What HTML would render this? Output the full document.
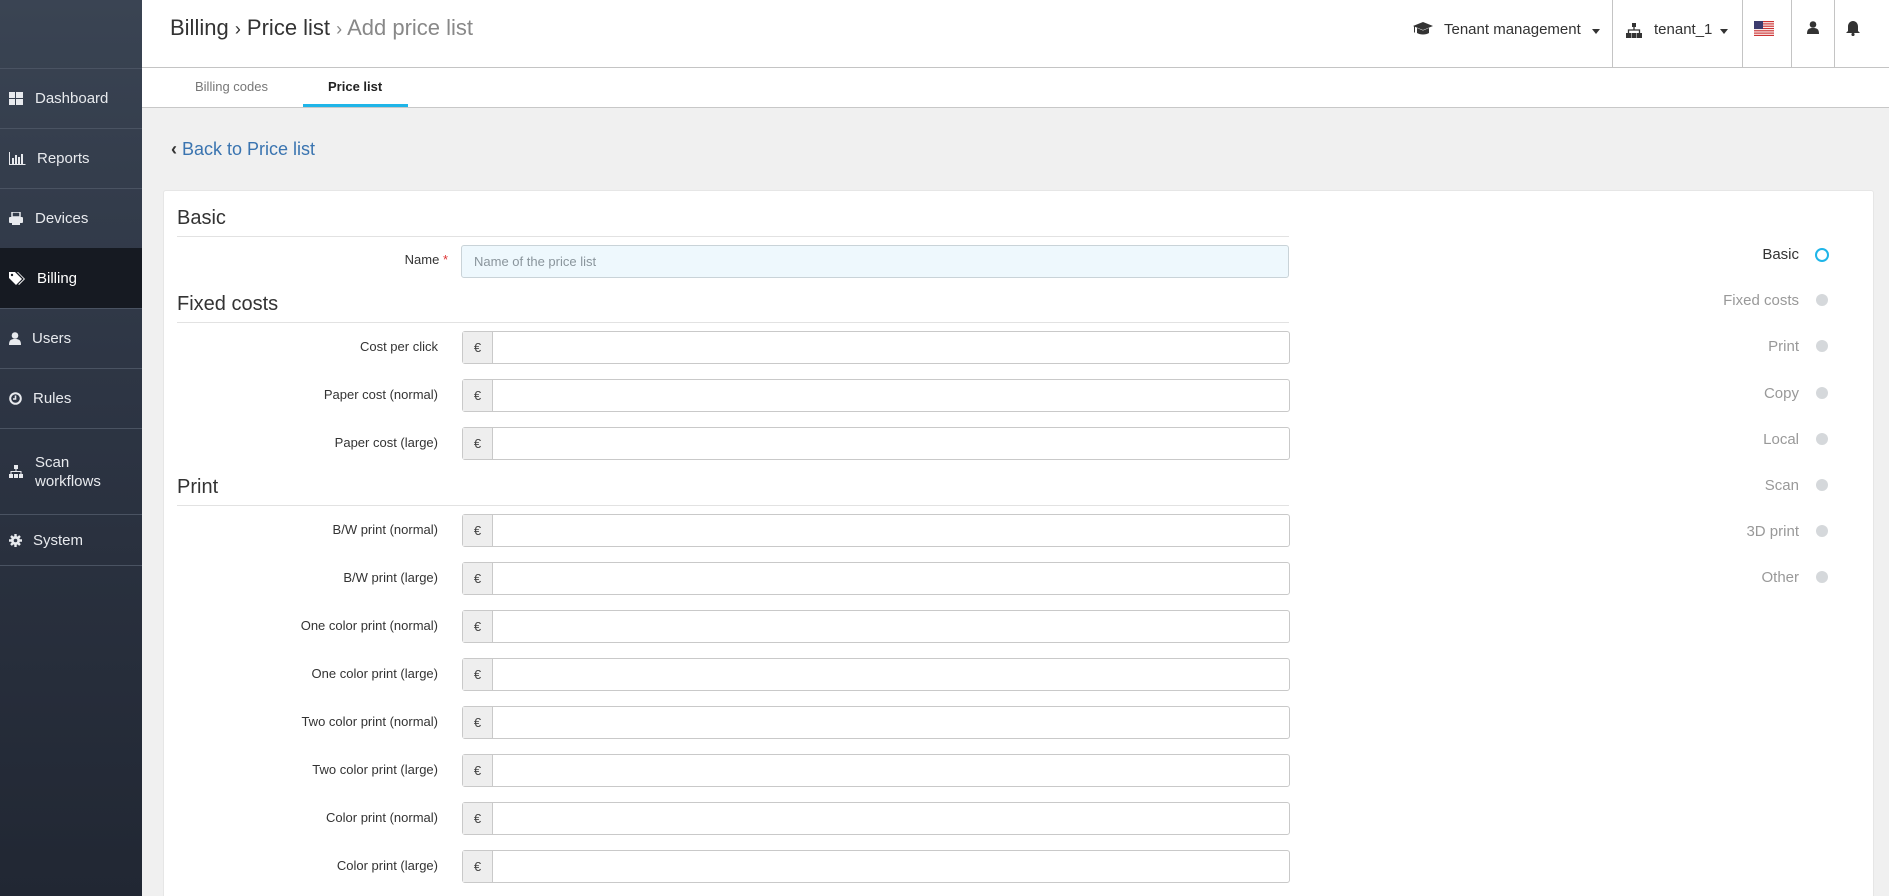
<!DOCTYPE html>
<html style="overflow:hidden"><head><meta charset="utf-8"><style>
*{box-sizing:border-box;margin:0;padding:0}
html,body{width:1889px;height:896px;overflow:hidden}
body{background:#f0f0f0;font-family:"Liberation Sans",sans-serif;position:relative}
.sb{position:absolute;left:0;top:0;width:142px;height:896px;background:linear-gradient(#3a4453,#2e3645 40%,#212733)}
.it{position:absolute;left:0;width:142px;border-top:1px solid #4a5362;color:#e8eaee;font-size:15px;display:flex;align-items:center}
.it svg{position:absolute;left:9px}
.it span{position:absolute;left:35px}
.hd{position:absolute;left:142px;top:0;right:0;height:68px;background:#fff;border-bottom:1px solid #c4c4c4}
.bc{position:absolute;left:170px;top:15px;font-size:22px;color:#333}
.bc .g{color:#888}
.tabs{position:absolute;left:142px;top:68px;right:0;height:40px;background:#fff;border-bottom:1px solid #c8c8c8}
.card{position:absolute;left:163px;top:190px;width:1711px;height:720px;background:#fff;border:1px solid #e6e6e6;border-radius:3px}
.h{position:absolute;left:177px;width:1112px;font-size:20px;color:#333;border-bottom:1px solid #e2e2e2;height:30px}
.lb{position:absolute;width:438px;text-align:right;font-size:13px;color:#333}
.in{position:absolute;left:462px;width:828px;height:33px;border:1px solid #c9c9c9;border-radius:3px;background:#fff}
.ad{position:absolute;left:0;top:0;width:30px;height:31px;background:#eeeeee;border-right:1px solid #c9c9c9;font-size:13px;color:#444;text-align:center;line-height:31px}
.nv{position:absolute;width:1799px;left:0;text-align:right;font-size:15px;color:#999}
.dot{position:absolute;left:1816px;width:12px;height:12px;border-radius:50%;background:#d5d8db}
.sep{position:absolute;top:0;width:1px;height:68px;background:#c4c4c4}
</style></head><body>
<div class="sb">
<div class="it" style="top:68px;height:60px"><svg width="14" height="13" viewBox="0 0 14 13"><rect x="0" y="0" width="6" height="6" fill="#e8eaee"/><rect x="7" y="0" width="7" height="6" fill="#e8eaee"/><rect x="0" y="7" width="6" height="6" fill="#e8eaee"/><rect x="7" y="7" width="7" height="6" fill="#e8eaee"/></svg><span>Dashboard</span></div>
<div class="it" style="top:128px;height:60px"><svg width="17" height="13" viewBox="0 0 17 13"><path d="M0.5 0v12.5h16" stroke="#e8eaee" fill="none"/><rect x="3" y="6" width="2" height="6" fill="#e8eaee"/><rect x="6" y="3" width="2" height="9" fill="#e8eaee"/><rect x="9" y="5" width="2" height="7" fill="#e8eaee"/><rect x="12" y="2" width="2" height="10" fill="#e8eaee"/></svg><span style="left:37px">Reports</span></div>
<div class="it" style="top:188px;height:60px"><svg width="14" height="13" viewBox="0 0 14 13"><rect x="3" y="0" width="8" height="5" fill="none" stroke="#e8eaee" stroke-width="1.5"/><rect x="0" y="5" width="14" height="6" rx="1" fill="#e8eaee"/><rect x="3" y="9" width="8" height="4" fill="#e8eaee"/></svg><span>Devices</span></div>
<div class="it" style="top:248px;height:60px;background:#161a22;color:#fff;border-top-color:#161a22"><svg width="16" height="14" viewBox="0 0 16 14"><path d="M0 0h6l7 7-6 6-7-7z" fill="#fff"/><circle cx="3" cy="3" r="1.2" fill="#161a22"/><path d="M8 0h1l7 7-6 6-.7-.7 5.5-5.3z" fill="#fff"/></svg><span style="left:37px">Billing</span></div>
<div class="it" style="top:308px;height:60px"><svg width="12" height="13" viewBox="0 0 12 13"><circle cx="6" cy="3.5" r="3.3" fill="#e8eaee"/><path d="M0 13c0-5 2-6 6-6s6 1 6 6z" fill="#e8eaee"/></svg><span style="left:32px">Users</span></div>
<div class="it" style="top:368px;height:60px"><svg width="13" height="13" viewBox="0 0 13 13"><circle cx="6.5" cy="6.5" r="5.3" fill="none" stroke="#e8eaee" stroke-width="2"/><path d="M6.5 3.5v3.5h-2.5" stroke="#e8eaee" stroke-width="1.6" fill="none"/></svg><span style="left:33px">Rules</span></div>
<div class="it" style="top:428px;height:86px"><svg width="14" height="13" viewBox="0 0 14 13"><rect x="5" y="0" width="4" height="4" fill="#e8eaee"/><path d="M7 4v3M2 9V6.5h10V9" stroke="#e8eaee" fill="none"/><rect x="0" y="9" width="4" height="4" fill="#e8eaee"/><rect x="5" y="9" width="4" height="4" fill="#e8eaee"/><rect x="10" y="9" width="4" height="4" fill="#e8eaee"/></svg><span style="line-height:19px">Scan<br>workflows</span></div>
<div class="it" style="top:514px;height:52px;border-bottom:1px solid #4a5362"><svg width="13" height="13" viewBox="0 0 13 13"><circle cx="6.5" cy="6.5" r="4.5" fill="#e8eaee"/><path d="M6.5 0v13M0 6.5h13M2 2l9 9M11 2l-9 9" stroke="#e8eaee" stroke-width="2.4"/><circle cx="6.5" cy="6.5" r="1.8" fill="#2e3645"/></svg><span style="left:33px">System</span></div>
</div>
<div class="hd">
<div class="bc" style="left:28px">Billing <span style="font-size:18px">›</span> Price list <span class="g" style="font-size:18px">›</span> <span class="g">Add price list</span></div>
<svg style="position:absolute;left:1271px;top:22px" width="20" height="15" viewBox="0 0 20 15"><path d="M0 4l10-4 10 4-10 4z" fill="#333"/><path d="M4 6v5c3 2 9 2 12 0V6l-6 2.5z" fill="#333"/><path d="M1.5 4.5v6" stroke="#333"/></svg>
<div style="position:absolute;left:1302px;top:21px;font-size:15px;color:#333">Tenant management</div>
<div style="position:absolute;left:1450px;top:29px;border:4px solid transparent;border-top:5px solid #333"></div>
<div class="sep" style="left:1470px"></div>
<svg style="position:absolute;left:1484px;top:23px" width="16" height="15" viewBox="0 0 16 15"><rect x="6" y="0" width="4" height="4" fill="#333"/><path d="M8 4v3M2.5 10V7h11v3" stroke="#333" stroke-width="1.3" fill="none"/><rect x="0" y="10" width="5" height="5" fill="#333"/><rect x="5.5" y="10" width="5" height="5" fill="#333"/><rect x="11" y="10" width="5" height="5" fill="#333"/></svg>
<div style="position:absolute;left:1512px;top:21px;font-size:15px;color:#333">tenant_1</div>
<div style="position:absolute;left:1578px;top:29px;border:4px solid transparent;border-top:5px solid #333"></div>
<div class="sep" style="left:1600px"></div>
<svg style="position:absolute;left:1612px;top:21px" width="20" height="15" viewBox="0 0 20 15"><rect width="20" height="15" fill="#fff"/><g fill="#c33"><rect y="0" width="20" height="1.2"/><rect y="2.3" width="20" height="1.2"/><rect y="4.6" width="20" height="1.2"/><rect y="6.9" width="20" height="1.2"/><rect y="9.2" width="20" height="1.2"/><rect y="11.5" width="20" height="1.2"/><rect y="13.8" width="20" height="1.2"/></g><rect width="9" height="8" fill="#3c3b6e"/></svg>
<div class="sep" style="left:1649px"></div>
<svg style="position:absolute;left:1665px;top:21px" width="12" height="13" viewBox="0 0 12 13"><circle cx="6" cy="3.5" r="3.3" fill="#333"/><path d="M0 13c0-5 2-6 6-6s6 1 6 6z" fill="#333"/></svg>
<div class="sep" style="left:1692px"></div>
<svg style="position:absolute;left:1704px;top:21px" width="14" height="15" viewBox="0 0 14 15"><path d="M7 0c-3 0-5 2.5-5 5.5V10L0 12h14l-2-2V5.5C12 2.5 10 0 7 0z" fill="#333"/><circle cx="7" cy="13.5" r="1.6" fill="#333"/></svg>
</div>
<div class="tabs">
<div style="position:absolute;left:53px;top:11px;font-size:13px;color:#777">Billing codes</div>
<div style="position:absolute;left:186px;top:11px;font-size:13px;color:#222;font-weight:bold">Price list</div>
<div style="position:absolute;left:161px;top:36px;width:105px;height:3px;background:#1fb5e8"></div>
</div>
<div style="position:absolute;left:171px;top:139px;font-size:18px;color:#3a74b0"><span style="color:#333;font-size:18px;font-weight:bold">‹</span> Back to Price list</div>
<div class="card"></div>
<div class="h" style="top:207px">Basic</div>
<div class="lb" style="top:252px;width:448px">Name <span style="color:#d33">*</span></div>
<div class="in" style="top:245px;left:461px;background:#eef8fd;border-color:#c9d3d8;padding-left:12px;font-size:13px;color:#8a959c;line-height:31px">Name of the price list</div>
<div class="h" style="top:293px">Fixed costs</div>
<div class="lb" style="top:339px">Cost per click</div><div class="in" style="top:331px"><div class="ad">€</div></div>
<div class="lb" style="top:387px">Paper cost (normal)</div><div class="in" style="top:379px"><div class="ad">€</div></div>
<div class="lb" style="top:435px">Paper cost (large)</div><div class="in" style="top:427px"><div class="ad">€</div></div>
<div class="h" style="top:476px">Print</div>
<div class="lb" style="top:522px">B/W print (normal)</div><div class="in" style="top:514px"><div class="ad">€</div></div>
<div class="lb" style="top:570px">B/W print (large)</div><div class="in" style="top:562px"><div class="ad">€</div></div>
<div class="lb" style="top:618px">One color print (normal)</div><div class="in" style="top:610px"><div class="ad">€</div></div>
<div class="lb" style="top:666px">One color print (large)</div><div class="in" style="top:658px"><div class="ad">€</div></div>
<div class="lb" style="top:714px">Two color print (normal)</div><div class="in" style="top:706px"><div class="ad">€</div></div>
<div class="lb" style="top:762px">Two color print (large)</div><div class="in" style="top:754px"><div class="ad">€</div></div>
<div class="lb" style="top:810px">Color print (normal)</div><div class="in" style="top:802px"><div class="ad">€</div></div>
<div class="lb" style="top:858px">Color print (large)</div><div class="in" style="top:850px"><div class="ad">€</div></div>
<div class="nv" style="top:246px;color:#333">Basic</div><div class="dot" style="top:248px;background:#fff;border:2px solid #1fb5e8;width:14px;height:14px;left:1815px"></div>
<div class="nv" style="top:292px">Fixed costs</div><div class="dot" style="top:294px"></div>
<div class="nv" style="top:338px">Print</div><div class="dot" style="top:340px"></div>
<div class="nv" style="top:385px">Copy</div><div class="dot" style="top:387px"></div>
<div class="nv" style="top:431px">Local</div><div class="dot" style="top:433px"></div>
<div class="nv" style="top:477px">Scan</div><div class="dot" style="top:479px"></div>
<div class="nv" style="top:523px">3D print</div><div class="dot" style="top:525px"></div>
<div class="nv" style="top:569px">Other</div><div class="dot" style="top:571px"></div>
</body></html>
